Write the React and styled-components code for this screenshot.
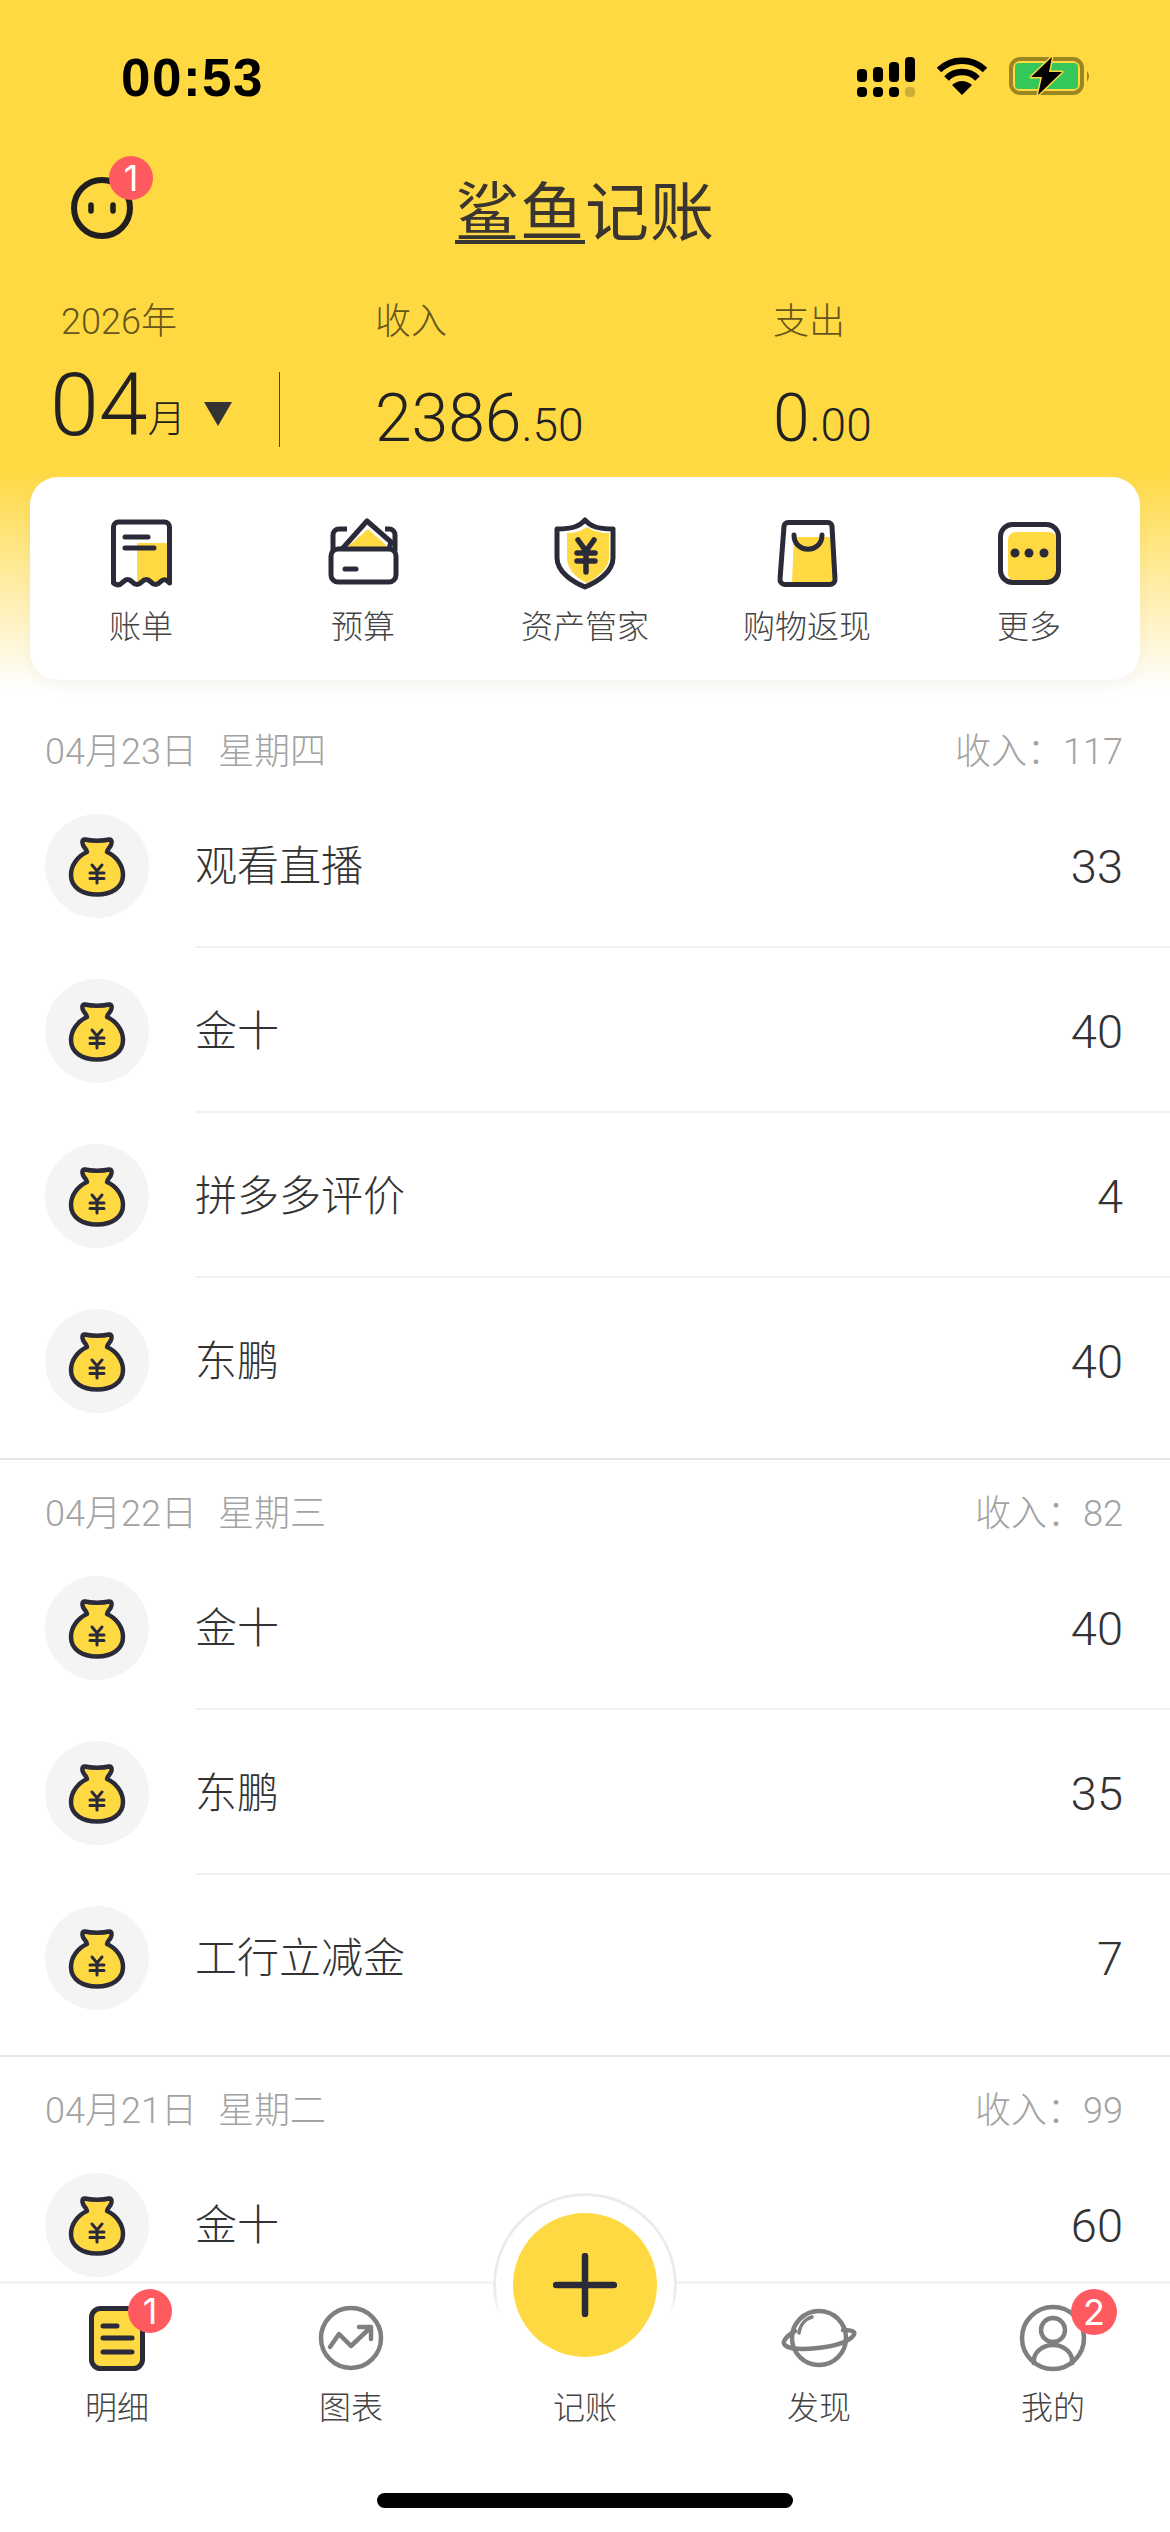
import React from 'react'
import styled, { createGlobalStyle } from 'styled-components'

const YELLOW = '#ffd942'
const INK = '#2a2a38'
const GREY = '#7f7f7f'
const SANS = `Roboto, "Noto Sans CJK SC", sans-serif`

const GlobalStyle = createGlobalStyle`
  html, body { margin: 0; padding: 0; background: #fff; }
  body { width: 1170px; height: 2532px; overflow: hidden; font-family: ${SANS}; }
`

const groups = [
  {
    date: '04月23日', week: '星期四', income: '117',
    rows: [['观看直播', '33'], ['金十', '40'], ['拼多多评价', '4'], ['东鹏', '40']],
  },
  {
    date: '04月22日', week: '星期三', income: '82',
    rows: [['金十', '40'], ['东鹏', '35'], ['工行立减金', '7']],
  },
  {
    date: '04月21日', week: '星期二', income: '99',
    rows: [['金十', '60']],
  },
]

const SignalIcon = () => (
  <svg width="58" height="40" viewBox="0 0 58 40">
    <rect x="0" y="12" width="10" height="13" rx="4" />
    <rect x="16" y="10" width="10" height="15" rx="4" />
    <rect x="32" y="5" width="10" height="20" rx="4" />
    <rect x="48" y="0" width="10" height="25" rx="4" />
    <rect x="0" y="30" width="10" height="10" rx="4" />
    <rect x="16" y="30" width="10" height="10" rx="4" />
    <rect x="32" y="30" width="10" height="10" rx="4" />
    <rect x="48" y="30" width="10" height="10" rx="4" fill="#cdae38" />
  </svg>
)

const WifiIcon = () => (
  <svg width="50" height="38" viewBox="0 0 50 38" fill="none" stroke="#000">
    <path d="M2 13A33 33 0 0 1 48 13" strokeWidth="6.5" />
    <path d="M9.5 21.5A22 22 0 0 1 40.5 21.5" strokeWidth="6.5" />
    <path d="M25 38L15 28Q25 20 35 28Z" fill="#000" stroke="none" />
  </svg>
)

const BatteryIcon = () => (
  <svg width="82" height="38" viewBox="0 0 82 38" style={{ overflow: 'visible' }}>
    <rect x="2" y="2" width="71" height="34" rx="9" fill="none" stroke="#9c8420" strokeWidth="4" />
    <rect x="6" y="6" width="63" height="26" rx="4" fill="#34c759" />
    <path d="M78 14q4 5 0 11Z" fill="#9c8420" />
    <path
      d="M43 0L22 20H33L29 38L53 15H40Z"
      fill="#000"
      stroke={YELLOW}
      strokeWidth="3"
      paintOrder="stroke"
      strokeLinejoin="round"
    />
  </svg>
)

const FaceIcon = () => (
  <svg width="66" height="66" viewBox="0 0 66 66" fill="none" stroke="#1f1f1f" strokeLinecap="round">
    <circle cx="33" cy="33" r="28" strokeWidth="6" />
    <path d="M22 30v6M44 30v6" strokeWidth="5.5" />
  </svg>
)

const ReceiptIcon = () => (
  <svg width="76" height="76" viewBox="0 0 76 76" fill="none">
    <rect x="34" y="27" width="31" height="39" fill={YELLOW} />
    <path
      d="M66.5 67q-4.6-6-9.3-1t-9.3 0t-9.3 0t-9.3 0t-9.3 0t-9.5 1V11a5 5 0 0 1 5-5H61.5a5 5 0 0 1 5 5Z"
      stroke={INK}
      strokeWidth="5"
      strokeLinejoin="round"
    />
    <path d="M22 21H45M22 32H51" stroke={INK} strokeWidth="5" strokeLinecap="round" />
  </svg>
)

const WalletIcon = () => (
  <svg width="76" height="76" viewBox="0 0 76 76" fill="none" stroke={INK} strokeWidth="5" strokeLinejoin="round">
    <path d="M16 33L8 35V19a6 6 0 0 1 6-6h8M60 13h4a6 6 0 0 1 6 6v16" />
    <path d="M17 33L42 5L66 26L64 33" fill="#fff" />
    <path d="M20 33L43 13L61 29V33Z" fill={YELLOW} stroke="none" />
    <rect x="6" y="33" width="65" height="33" rx="7" fill="#fff" />
    <path d="M20 53H31" strokeLinecap="round" />
  </svg>
)

const ShieldIcon = () => (
  <svg width="76" height="76" viewBox="0 0 76 76" fill="none">
    <path d="M20 17C28 17 34 15 40 11C46 15 54 17 62 17V42C62 52 50 62 40 67C32 64 20 54 20 42Z" fill={YELLOW} />
    <path
      d="M38 4C43 10 50 13 66 13V42C66 56 50 66 38 71C26 66 10 56 10 42V13C26 13 33 10 38 4Z"
      stroke={INK}
      strokeWidth="5"
      strokeLinejoin="round"
    />
    <path d="M31 24L39 35L47 24M30 37H48M30 45H48M39 35V56" stroke={INK} strokeWidth="5.5" strokeLinecap="round" />
  </svg>
)

const BagIcon = () => (
  <svg width="76" height="76" viewBox="0 0 76 76" fill="none">
    <path d="M25 21H60a3 3 0 0 1 3 3L65 66H23Z" fill={YELLOW} />
    <path
      d="M19 6.5H59a4 4 0 0 1 4 4L66 63a5 5 0 0 1-5 5.5H16a5 5 0 0 1-5-5.5L15 10.500a4 4 0 0 1 4-4Z"
      stroke={INK}
      strokeWidth="5"
      strokeLinejoin="round"
    />
    <path d="M25 19C25 38 53 38 53 19" stroke={INK} strokeWidth="5" strokeLinecap="round" />
  </svg>
)

const MoreIcon = () => (
  <svg width="76" height="76" viewBox="0 0 76 76" fill="none">
    <rect x="17" y="16" width="49" height="50" rx="8" fill={YELLOW} />
    <rect x="9.500" y="8.500" width="58" height="58" rx="12" stroke={INK} strokeWidth="5" />
    <circle cx="24" cy="37" r="4.500" fill={INK} />
    <circle cx="38" cy="37" r="4.500" fill={INK} />
    <circle cx="53" cy="37" r="4.500" fill={INK} />
  </svg>
)

const MoneyBagIcon = () => (
  <svg width="104" height="104" viewBox="0 0 104 104" fill="none" stroke={INK} strokeLinecap="round">
    <path
      d="M40 25.500C46 27 58 27 64 25.500C67 25 67 29 66 31C65 34 62 35 62 38C71 42 78 51 78 61C78 74 66 80.500 52 80.500C38 80.500 26 74 26 61C26 51 33 42 42 38C42 35 39 34 38 31C37 29 37 25 40 25.500Z"
      fill={YELLOW}
      strokeWidth="4.500"
      strokeLinejoin="round"
    />
    <path d="M47 51L52 57L57 51M45 59H59M45 64.500H59M52 57V69" strokeWidth="3" />
  </svg>
)

const ListTabIcon = () => (
  <svg width="76" height="76" viewBox="0 0 76 76" fill="none" stroke={INK} strokeLinecap="round">
    <rect x="12.500" y="8.500" width="51" height="60" rx="9" fill={YELLOW} strokeWidth="5" />
    <path d="M24 26H38M24 38H53M24 52H53" strokeWidth="5" />
  </svg>
)

const ChartTabIcon = () => (
  <svg width="76" height="76" viewBox="0 0 76 76" fill="none" stroke={GREY} strokeWidth="4.500" strokeLinejoin="round" strokeLinecap="round">
    <circle cx="38" cy="38" r="30" />
    <path d="M17 47L26 34L38 46L57 28M46 27H58V39" />
  </svg>
)

const PlanetTabIcon = () => (
  <svg width="76" height="76" viewBox="0 0 76 76" fill="none" stroke={GREY} strokeWidth="4.500" strokeLinecap="round">
    <circle cx="38" cy="38" r="27" />
    <path d="M14 31C4 37 0 43 5 46C15 52 58 48 70 38C76 33 74 30 62 30" fill="none" />
    <path d="M18 33C19 25 24 19 31 17" strokeWidth="3.500" />
  </svg>
)

const UserTabIcon = () => (
  <svg width="76" height="76" viewBox="0 0 76 76" fill="none" stroke={GREY} strokeWidth="4.500">
    <circle cx="38" cy="38" r="31" />
    <circle cx="38" cy="30" r="12" />
    <path d="M19 65V60C19 52 28 45 38 45C48 45 57 52 57 60V65" />
  </svg>
)

const PlusIcon = () => (
  <svg width="64" height="64" viewBox="0 0 64 64" stroke={INK} strokeWidth="6.500" strokeLinecap="round">
    <path d="M32 3V61M3 32H61" />
  </svg>
)

const shortcuts = [
  ['账单', ReceiptIcon],
  ['预算', WalletIcon],
  ['资产管家', ShieldIcon],
  ['购物返现', BagIcon],
  ['更多', MoreIcon],
]

const tabs = [
  { label: '明细', Icon: ListTabIcon, badge: '1' },
  { label: '图表', Icon: ChartTabIcon },
  { label: '记账', center: true },
  { label: '发现', Icon: PlanetTabIcon },
  { label: '我的', Icon: UserTabIcon, badge: '2' },
]

const App = () => {
  return (
    <Phone>
      <GlobalStyle />
      <Top>
        <StatusBar>
          <Time>00:53</Time>
          <StatusIcons>
            <SignalIcon />
            <WifiIcon />
            <BatteryIcon />
          </StatusIcons>
        </StatusBar>

        <NavRow>
          <Avatar>
            <FaceIcon />
            <Badge $top={-19} $left={40} $size={44}>1</Badge>
          </Avatar>
          <Logo><LogoLine>鲨鱼</LogoLine>记账</Logo>
        </NavRow>

        <Summary>
          <SummaryLabel $inset={6}>2026年</SummaryLabel>
          <SummaryLabel>收入</SummaryLabel>
          <SummaryLabel>支出</SummaryLabel>
          <MonthCell>
            <MonthNum>04</MonthNum>
            <MonthUnit>月</MonthUnit>
            <Caret />
            <MonthDivider />
          </MonthCell>
          <Amount>2386<small>.50</small></Amount>
          <Amount>0<small>.00</small></Amount>
        </Summary>

        <Card>
          {shortcuts.map(([label, Icon]) => (
            <Shortcut key={label}>
              <Icon />
              <ShortcutLabel>{label}</ShortcutLabel>
            </Shortcut>
          ))}
        </Card>
      </Top>

      <List>
        {groups.map((group) => (
          <Group key={group.date}>
            <DayHeader>
              <span>{group.date}<WeekDay>{group.week}</WeekDay></span>
              <span>收入：{group.income}</span>
            </DayHeader>
            {group.rows.map(([name, value], i) => (
              <Row key={i}>
                <Tile><MoneyBagIcon /></Tile>
                <RowBody $last={i === group.rows.length - 1}>
                  <RowName>{name}</RowName>
                  <RowValue>{value}</RowValue>
                </RowBody>
              </Row>
            ))}
          </Group>
        ))}
      </List>

      <TabBar>
        {tabs.map(({ label, Icon, badge, center }) => (
          <Tab key={label}>
            <TabIcon>
              {center ? (
                <>
                  <Ring />
                  <AddButton><PlusIcon /></AddButton>
                </>
              ) : (
                <Icon />
              )}
              {badge && <Badge $top={-11} $left={label === '明细' ? 49 : 56} $size={label === '明细' ? 44 : 46}>{badge}</Badge>}
            </TabIcon>
            <TabLabel>{label}</TabLabel>
          </Tab>
        ))}
        <HomeBar />
      </TabBar>
    </Phone>
  )
}

export default App

const Phone = styled.div`
  width: 1170px;
  height: 2532px;
  display: flex;
  flex-direction: column;
  overflow: hidden;
  background: #fff;
`

const Top = styled.div`
  height: 698px;
  flex: none;
  box-sizing: border-box;
  background: linear-gradient(${YELLOW} 0, ${YELLOW} 470px, #fff 690px);
`

const StatusBar = styled.div`
  height: 130px;
  box-sizing: border-box;
  padding: 50px 79px 0 121px;
  display: flex;
  justify-content: space-between;
  align-items: flex-start;
`

const Time = styled.div`
  font: 700 53px/56px "Liberation Sans", sans-serif;
  letter-spacing: 1.500px;
  color: #000;
`

const StatusIcons = styled.div`
  display: flex;
  align-items: flex-start;
  gap: 22px;
  padding-top: 7px;
`

const NavRow = styled.div`
  height: 156px;
  position: relative;
  display: flex;
  align-items: center;
  justify-content: center;
`

const Avatar = styled.div`
  position: absolute;
  left: 69px;
  top: 45px;
  width: 66px;
  height: 66px;
`

const Badge = styled.div`
  position: absolute;
  top: ${(p) => p.$top}px;
  left: ${(p) => p.$left}px;
  width: ${(p) => p.$size}px;
  height: ${(p) => p.$size}px;
  border-radius: 50%;
  background: #ff5a5f;
  color: #fff;
  font: 400 36px/${(p) => p.$size}px Inter, sans-serif;
  text-align: center;
`

const Logo = styled.div`
  font: 400 64px/80px "Noto Sans CJK SC", sans-serif;
  color: #3a3530;
  letter-spacing: 1px;
  margin-top: -3px;
`

const LogoLine = styled.span`
  display: inline-block;
  line-height: 66px;
  border-bottom: 4px solid #3a3530;
`

const Summary = styled.div`
  display: grid;
  grid-template-columns: 320px 398px 1fr;
  grid-template-rows: 56px 105px;
  padding: 0 0 0 55px;
  height: 191px;
`

const SummaryLabel = styled.div`
  font: 300 36px/40px ${SANS};
  color: #66561c;
  padding: 16px 0 0 ${(p) => p.$inset || 0}px;
`

const MonthCell = styled.div`
  display: flex;
  align-items: flex-end;
  width: 225px;
  height: 75px;
  align-self: end;
  position: relative;
`

const MonthNum = styled.div`
  font: 300 88px/75px ${SANS};
  color: #222;
  margin: 0 0 5px -5px;
`

const MonthUnit = styled.div`
  font: 300 38px/56px ${SANS};
  color: #222;
  margin-bottom: 0;
`

const Caret = styled.div`
  width: 0;
  height: 0;
  border-style: solid;
  border-width: 24px 14px 0;
  border-color: #333 transparent transparent;
  margin: 0 0 21px 18px;
`

const MonthDivider = styled.div`
  position: absolute;
  right: 0;
  top: 0;
  width: 1px;
  height: 75px;
  background: #4c4420;
`

const Amount = styled.div`
  font: 300 66px/80px ${SANS};
  color: #222;
  align-self: end;
  margin-bottom: -18px;
  small {
    font-size: 46px;
  }
`

const Card = styled.div`
  margin: 0 30px;
  height: 203px;
  border-radius: 28px;
  background: #fff;
  box-shadow: 0 6px 18px rgba(0, 0, 0, 0.04);
  display: grid;
  grid-template-columns: repeat(5, 1fr);
`

const Shortcut = styled.div`
  display: flex;
  flex-direction: column;
  align-items: center;
  padding-top: 39px;
`

const ShortcutLabel = styled.div`
  font: 300 32px/40px ${SANS};
  color: #444;
  margin-top: 15px;
`

const List = styled.div`
  flex: 1;
  min-height: 0;
  overflow: hidden;
`

const Group = styled.div`
  padding-bottom: 15px;
  border-bottom: 2px solid #e6e6e6;
`

const DayHeader = styled.div`
  height: 85px;
  box-sizing: border-box;
  padding: 23px 47px 0 45px;
  display: flex;
  justify-content: space-between;
  align-items: center;
  font: 300 36px/40px ${SANS};
  color: #a3a3a3;
`

const WeekDay = styled.span`
  margin-left: 21px;
`

const Row = styled.div`
  height: 165px;
  padding-left: 45px;
  display: flex;
  align-items: center;
`

const Tile = styled.div`
  width: 104px;
  height: 104px;
  flex: none;
  border-radius: 50%;
  background: #f4f4f5;
  margin-right: 46px;
`

const RowBody = styled.div`
  flex: 1;
  align-self: stretch;
  box-sizing: border-box;
  padding: 4px 47px 0 0;
  display: flex;
  justify-content: space-between;
  align-items: center;
  border-bottom: 2px solid ${(p) => (p.$last ? 'transparent' : '#f1f1f1')};
`

const RowName = styled.div`
  font: 300 42px/50px ${SANS};
  color: #333;
`

const RowValue = styled.div`
  font: 300 47px/50px ${SANS};
  color: #333;
`

const TabBar = styled.div`
  height: 251px;
  flex: none;
  box-sizing: border-box;
  position: relative;
  background: #fff;
  border-top: 3px solid #f4f4f4;
  display: grid;
  grid-template-columns: repeat(5, 1fr);
  align-content: start;
`

const Tab = styled.div`
  display: flex;
  flex-direction: column;
  align-items: center;
  padding-top: 16px;
`

const TabIcon = styled.div`
  position: relative;
  width: 76px;
  height: 76px;
`

const Ring = styled.div`
  position: absolute;
  left: -54px;
  top: -107px;
  width: 184px;
  height: 184px;
  box-sizing: border-box;
  border-radius: 50%;
  border: 3px solid #ebebeb;
  background: #fff;
  mask-image: linear-gradient(#000 55%, transparent 66%);
`

const AddButton = styled.div`
  position: absolute;
  left: -34px;
  top: -87px;
  width: 144px;
  height: 144px;
  border-radius: 50%;
  background: ${YELLOW};
  display: flex;
  align-items: center;
  justify-content: center;
`

const TabLabel = styled.div`
  font: 300 32px/40px ${SANS};
  color: #444;
  margin-top: 12px;
`

const HomeBar = styled.div`
  position: absolute;
  left: 377px;
  top: 209px;
  width: 416px;
  height: 15px;
  border-radius: 8px;
  background: #000;
`
